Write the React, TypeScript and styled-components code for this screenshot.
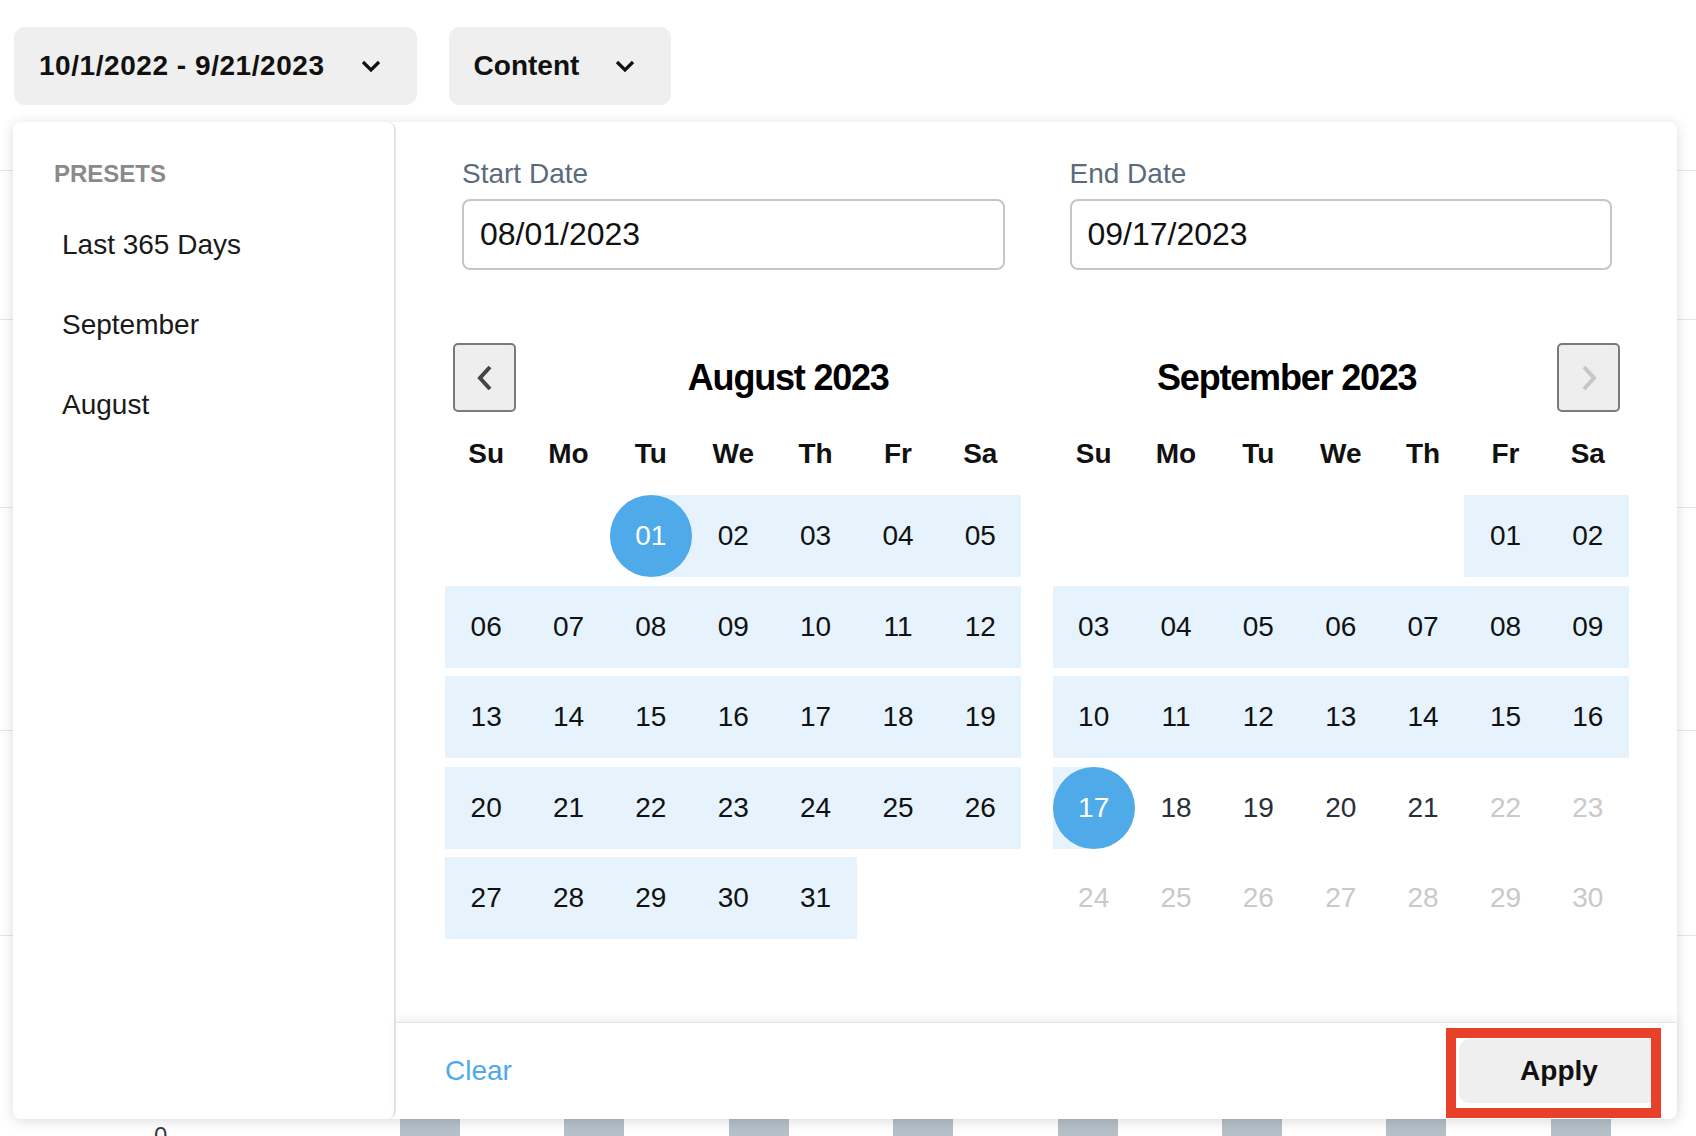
import React from "react";
import styled, { createGlobalStyle } from "styled-components";

const GlobalStyle = createGlobalStyle`
  html, body {
    margin: 0;
    padding: 0;
    background: #ffffff;
    overflow: hidden;
  }
  body {
    font-family: "Liberation Sans", Arial, Helvetica, sans-serif;
    color: #111111;
  }
  * {
    box-sizing: border-box;
  }
`;

const BLUE = "#4eaae8";
const BAND = "#e6f3fc";

const Page = styled.div`
  position: relative;
  width: 1696px;
  height: 1136px;
  overflow: hidden;
`;

const Toolbar = styled.div`
  display: flex;
  gap: 32px;
  padding: 27px 0 0 14px;
`;

const ToolbarButton = styled.button`
  display: inline-flex;
  align-items: center;
  gap: 36px;
  height: 78px;
  padding: 0 36px 0 25px;
  border: none;
  border-radius: 11px;
  background: #efefef;
  font-family: inherit;
  font-size: 28px;
  font-weight: 700;
  color: #111;
`;

const RangeText = styled.span`
  letter-spacing: 0.55px;
`;

const ChartArea = styled.div`
  position: relative;
  margin-top: 65px;
  height: 966px;
  border-top: 1px solid #e8e8e8;
  overflow: hidden;
`;

const GridLine = styled.div<{ $gap: number }>`
  margin-top: ${(p) => p.$gap}px;
  border-top: 1px solid #e4e6e9;
`;

const BarsLayer = styled.div`
  position: absolute;
  left: 400px;
  bottom: -40px;
  display: flex;
  align-items: flex-end;
  gap: 104.4px;
`;

const Bar = styled.div`
  width: 60px;
  background: #b5c0c8;
`;

const AxisLabel = styled.span`
  position: absolute;
  left: 154px;
  top: 953px;
  font-size: 24px;
  line-height: 24px;
  color: #333d47;
`;

const Panel = styled.div`
  position: absolute;
  top: 122px;
  left: 13px;
  width: 1664px;
  height: 997px;
  display: flex;
  background: #ffffff;
  border-radius: 8px;
  box-shadow: 0 2px 14px rgba(0, 0, 0, 0.14);
`;

const Sidebar = styled.aside`
  width: 383px;
  padding: 38px 0 0 41px;
  border-right: 2px solid #e2e5e9;
  border-radius: 8px;
`;

const PresetsTitle = styled.div`
  font-size: 24px;
  line-height: 28px;
  font-weight: 700;
  color: #8a8a8a;
`;

const PresetList = styled.ul`
  list-style: none;
  margin: 17px 0 0;
  padding: 0 0 0 8px;
`;

const PresetItem = styled.li`
  height: 80px;
  display: flex;
  align-items: center;
  font-size: 28px;
  color: #1a1a1a;
`;

const Main = styled.section`
  flex: 1;
  display: flex;
  flex-direction: column;
`;

const MainBody = styled.div`
  padding: 36px 48px 0 49px;
`;

const MonthsGrid = styled.div`
  display: grid;
  grid-template-columns: 1fr 1fr;
  gap: 31px;
`;

const MonthColumn = styled.div`
  display: flex;
  flex-direction: column;
`;

const Field = styled.label`
  display: flex;
  flex-direction: column;
  gap: 9px;
  margin: 0 17px;
`;

const FieldLabel = styled.span`
  font-size: 28px;
  line-height: 32px;
  color: #5b6b7c;
`;

const DateInput = styled.input`
  height: 71px;
  width: 100%;
  padding: 0 16px;
  border: 2px solid #c6c6c6;
  border-radius: 8px;
  font-family: inherit;
  font-size: 32px;
  color: #111;
  outline: none;
`;

const MonthHeader = styled.div`
  display: flex;
  align-items: center;
  height: 69px;
  margin-top: 73px;
  padding: 0 9px 0 8px;
`;

const NavButton = styled.button<{ $disabled?: boolean }>`
  width: 63px;
  height: 69px;
  display: flex;
  align-items: center;
  justify-content: center;
  padding: 0;
  border: 2px solid #7a7a7a;
  border-radius: 5px;
  background: #eeeeee;
  color: ${(p) => (p.$disabled ? "#c6c6c6" : "#444444")};
`;

const MonthTitle = styled.h2<{ $side: "left" | "right" }>`
  flex: 1;
  margin: 0;
  text-align: center;
  font-size: 36px;
  font-weight: 700;
  letter-spacing: -1.2px;
  color: #000;
  padding-left: ${(p) => (p.$side === "left" ? "48px" : "0")};
  padding-right: ${(p) => (p.$side === "right" ? "44px" : "0")};
`;

const Weekdays = styled.div`
  display: grid;
  grid-template-columns: repeat(7, 1fr);
  margin-top: 22px;
  height: 40px;
  line-height: 40px;
  text-align: center;
  font-size: 28px;
  font-weight: 700;
`;

const Weeks = styled.div`
  display: flex;
  flex-direction: column;
  gap: 8.5px;
  margin-top: 21px;
`;

const WeekRow = styled.div`
  display: grid;
  grid-template-columns: repeat(7, 1fr);
  height: 82px;
`;

type Band = "none" | "full" | "start" | "end";
type Tone = "range" | "normal" | "muted";

const bandBackground = (band: Band) => {
  if (band === "full") return BAND;
  if (band === "start") return `linear-gradient(to right, transparent 50%, ${BAND} 50%)`;
  if (band === "end") return `linear-gradient(to right, ${BAND} 50%, transparent 50%)`;
  return "transparent";
};

const toneColor: Record<Tone, string> = {
  range: "#111111",
  normal: "#26303b",
  muted: "#c9c9c9",
};

const DayCell = styled.div<{ $band: Band; $tone: Tone }>`
  display: flex;
  align-items: center;
  justify-content: center;
  font-size: 28px;
  color: ${(p) => toneColor[p.$tone]};
  background: ${(p) => bandBackground(p.$band)};
`;

const SelectedDay = styled.span`
  width: 100%;
  height: 100%;
  display: flex;
  align-items: center;
  justify-content: center;
  border-radius: 50%;
  background: ${BLUE};
  color: #ffffff;
`;

const Footer = styled.footer`
  position: relative;
  margin-top: auto;
  height: 97px;
  display: flex;
  align-items: center;
  justify-content: space-between;
  padding: 0 18px 0 49px;
  border-top: 1px solid #e4e4e4;
  border-bottom-right-radius: 8px;
  box-shadow: 0 -4px 8px rgba(0, 0, 0, 0.06);
`;

const ClearLink = styled.span`
  font-size: 28px;
  color: ${BLUE};
`;

const ApplyWrap = styled.div`
  position: relative;
`;

const ApplyButton = styled.button`
  width: 200px;
  height: 64px;
  border: none;
  border-radius: 10px;
  background: #efefef;
  font-family: inherit;
  font-size: 28px;
  font-weight: 700;
  color: #111;
`;

const Highlight = styled.span`
  position: absolute;
  top: -11px;
  left: -13px;
  right: -2px;
  bottom: -15px;
  border: 10px solid #e8412a;
  pointer-events: none;
`;

const ChevronDown = () => (
  <svg width="20" height="13" viewBox="0 0 20 13" fill="none">
    <polyline points="2,2 10,10 18,2" stroke="#111" strokeWidth="3.2" />
  </svg>
);

const ChevronSide = ({ dir }: { dir: "left" | "right" }) => (
  <svg width="18" height="28" viewBox="0 0 18 28" fill="none">
    <polyline
      points={dir === "left" ? "14,3 4,14 14,25" : "4,3 14,14 4,25"}
      stroke="currentColor"
      strokeWidth="4"
    />
  </svg>
);

const WEEKDAYS = ["Su", "Mo", "Tu", "We", "Th", "Fr", "Sa"];

interface MonthInfo {
  title: string;
  month: number;
  firstWeekday: number;
  days: number;
}

const AUGUST: MonthInfo = { title: "August 2023", month: 8, firstWeekday: 2, days: 31 };
const SEPTEMBER: MonthInfo = { title: "September 2023", month: 9, firstWeekday: 5, days: 30 };

// range Aug 1 -> Sep 17, today Sep 21
const dayKey = (month: number, day: number) => month * 100 + day;
const RANGE_START = dayKey(8, 1);
const RANGE_END = dayKey(9, 17);
const TODAY = dayKey(9, 21);

const buildWeeks = (info: MonthInfo) => {
  const cells: (number | null)[] = [];
  for (let i = 0; i < info.firstWeekday; i++) cells.push(null);
  for (let d = 1; d <= info.days; d++) cells.push(d);
  while (cells.length % 7) cells.push(null);
  const weeks: (number | null)[][] = [];
  for (let i = 0; i < cells.length; i += 7) weeks.push(cells.slice(i, i + 7));
  return weeks;
};

const Day = ({ month, day }: { month: number; day: number | null }) => {
  if (day === null) return <DayCell $band="none" $tone="normal" />;
  const key = dayKey(month, day);
  const label = String(day).padStart(2, "0");
  const isStart = key === RANGE_START;
  const isEnd = key === RANGE_END;
  const inRange = key >= RANGE_START && key <= RANGE_END;
  const band: Band = isStart ? "start" : isEnd ? "end" : inRange ? "full" : "none";
  const tone: Tone = inRange ? "range" : key > TODAY ? "muted" : "normal";
  return (
    <DayCell $band={band} $tone={tone}>
      {isStart || isEnd ? <SelectedDay>{label}</SelectedDay> : label}
    </DayCell>
  );
};

const Month = ({
  info,
  label,
  value,
  nav,
}: {
  info: MonthInfo;
  label: string;
  value: string;
  nav: "left" | "right";
}) => {
  const weeks = buildWeeks(info);
  return (
    <MonthColumn>
      <Field>
        <FieldLabel>{label}</FieldLabel>
        <DateInput readOnly value={value} />
      </Field>
      <MonthHeader>
        {nav === "left" && (
          <NavButton aria-label="Previous month">
            <ChevronSide dir="left" />
          </NavButton>
        )}
        <MonthTitle $side={nav}>{info.title}</MonthTitle>
        {nav === "right" && (
          <NavButton $disabled aria-label="Next month">
            <ChevronSide dir="right" />
          </NavButton>
        )}
      </MonthHeader>
      <Weekdays>
        {WEEKDAYS.map((w) => (
          <span key={w}>{w}</span>
        ))}
      </Weekdays>
      <Weeks>
        {weeks.map((week, i) => (
          <WeekRow key={i}>
            {week.map((day, j) => (
              <Day key={j} month={info.month} day={day} />
            ))}
          </WeekRow>
        ))}
      </Weeks>
    </MonthColumn>
  );
};

// gaps between horizontal grid lines of the chart behind the picker
const GRID_GAPS = [148, 187, 222, 204];
const BAR_HEIGHTS = [220, 180, 300, 260, 150, 240, 200, 280];

const App = () => {
  return (
    <Page>
      <GlobalStyle />
      <Toolbar>
        <ToolbarButton>
          <RangeText>10/1/2022 - 9/21/2023</RangeText>
          <ChevronDown />
        </ToolbarButton>
        <ToolbarButton>
          Content
          <ChevronDown />
        </ToolbarButton>
      </Toolbar>

      <ChartArea>
        {GRID_GAPS.map((g, i) => (
          <GridLine key={i} $gap={g} />
        ))}
        <AxisLabel>0</AxisLabel>
        <BarsLayer>
          {BAR_HEIGHTS.map((h, i) => (
            <Bar key={i} style={{ height: h }} />
          ))}
        </BarsLayer>
      </ChartArea>

      <Panel>
        <Sidebar>
          <PresetsTitle>PRESETS</PresetsTitle>
          <PresetList>
            <PresetItem>Last 365 Days</PresetItem>
            <PresetItem>September</PresetItem>
            <PresetItem>August</PresetItem>
          </PresetList>
        </Sidebar>
        <Main>
          <MainBody>
            <MonthsGrid>
              <Month info={AUGUST} label="Start Date" value="08/01/2023" nav="left" />
              <Month info={SEPTEMBER} label="End Date" value="09/17/2023" nav="right" />
            </MonthsGrid>
          </MainBody>
          <Footer>
            <ClearLink>Clear</ClearLink>
            <ApplyWrap>
              <ApplyButton>Apply</ApplyButton>
              <Highlight />
            </ApplyWrap>
          </Footer>
        </Main>
      </Panel>
    </Page>
  );
};

export default App;
